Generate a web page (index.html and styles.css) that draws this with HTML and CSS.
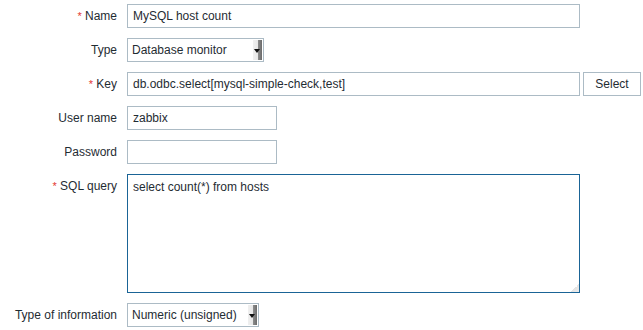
FILE: index.html
```html
<!DOCTYPE html>
<html lang="en">
<head>
  <meta charset="UTF-8" />
  <title>Item</title>
  <link rel="stylesheet" href="styles.css">
</head>
<body>
  <form class="form">
    <label class="lbl"><span class="req">*</span> Name</label>
    <div class="field"><input class="inp wide" type="text" value="MySQL host count"></div>

    <label class="lbl">Type</label>
    <div class="field">
      <div class="sel" style="width:137px"><span class="sel-text">Database monitor</span><span class="sel-arrow"></span></div>
    </div>

    <label class="lbl"><span class="req">*</span> Key</label>
    <div class="field">
      <input class="inp wide" type="text" value="db.odbc.select[mysql-simple-check,test]">
      <button class="btn" type="button">Select</button>
    </div>

    <label class="lbl">User name</label>
    <div class="field"><input class="inp short" type="text" value="zabbix"></div>

    <label class="lbl">Password</label>
    <div class="field"><input class="inp short" type="password" value=""></div>

    <label class="lbl lbl-top"><span class="req">*</span> SQL query</label>
    <div class="field">
      <div class="area-wrap">
        <textarea class="area">select count(*) from hosts</textarea>
        <span class="grip"></span>
      </div>
    </div>

    <label class="lbl">Type of information</label>
    <div class="field">
      <div class="sel" style="width:132px"><span class="sel-text">Numeric (unsigned)</span><span class="sel-arrow"></span></div>
    </div>
  </form>
</body>
</html>
```

FILE: styles.css
```css
html, body {
  margin: 0; padding: 0; background: #fff;
  font-family: "Liberation Sans", Arial, sans-serif; font-size: 12px;
  color: #1f2c33;
}

.form {
  display: grid;
  grid-template-columns: 117px 1fr;
  column-gap: 10px; row-gap: 10px;
  padding: 4px 0 0 0;
}

.lbl {
  text-align: right; align-self: center;
}
.lbl-top { align-self: start; padding-top: 5px; }

.req { color: #e33734; font-size: 11px; }

.field { display: flex; align-items: center; gap: 3px; }

.inp, .area, .btn, .sel {
  font-family: "Liberation Sans", Arial, sans-serif; font-size: 12px;
  color: #1f2c33; box-sizing: border-box; margin: 0;
}

.inp {
  height: 24px; border: 1px solid #acbbc5; padding: 0 5px;
  background: #fff; outline: none;
}
.wide { width: 453px; }
.short { width: 150px; }

.btn {
  height: 24px; width: 58px; border: 1px solid #acbbc5; background: #fff;
  padding: 0; cursor: pointer;
}

.area-wrap { position: relative; }

.area {
  width: 453px; height: 119px; border: 1px solid #1a6496;
  padding: 5px 5px; resize: none; outline: none; display: block;
}

.grip {
  position: absolute; right: 1px; bottom: 1px; width: 8px; height: 8px;
  background: linear-gradient(135deg, transparent 50%, #e4e4e4 50%, #ececec 100%);
}

.sel {
  height: 24px; border: 1px solid #acbbc5; background: #fff;
  display: flex; align-items: stretch; padding-left: 4px;
}
.sel-text { flex: 1; align-self: center; white-space: nowrap; }
.sel-arrow {
  width: 9px; position: relative;
  background: linear-gradient(to right, #f0f0f0 0, #e6e6e6 60%, #8a8a8a 60%, #6b6b6b 100%);
  margin: 1px 1px 1px 0;
}
.sel-arrow::after {
  content: ''; position: absolute; left: 1px; top: 9px;
  border-left: 3px solid transparent; border-right: 3px solid transparent;
  border-top: 4px solid #111;
}
```
